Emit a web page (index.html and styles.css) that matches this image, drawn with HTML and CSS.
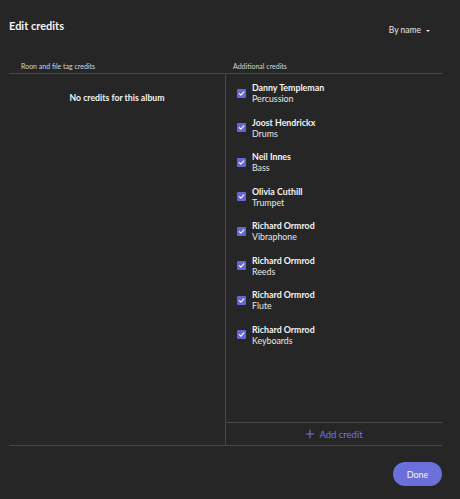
FILE: index.html
```html
<!DOCTYPE html>
<html>
<head>
<meta charset="utf-8">
<link rel="stylesheet" href="styles.css">
</head>
<body>
<div class="dialog">
  <div class="header">
    <h1 class="title">Edit credits</h1>
    <div class="sort">By name <span class="caret"></span></div>
  </div>
  <div class="table">
    <div class="col-head left-head">Roon and file tag credits</div>
    <div class="col-head right-head">Additional credits</div>
    <div class="col left-col">
      <div class="empty">No credits for this album</div>
    </div>
    <div class="col right-col">
      <ul class="credits">
        <li class="credit"><span class="check"><svg viewBox="0 0 10 10"><path d="M2.6 5.2 L4.3 6.9 L7.6 3.2" /></svg></span><div class="info"><div class="name">Danny Templeman</div><div class="role">Percussion</div></div></li>
        <li class="credit"><span class="check"><svg viewBox="0 0 10 10"><path d="M2.6 5.2 L4.3 6.9 L7.6 3.2" /></svg></span><div class="info"><div class="name">Joost Hendrickx</div><div class="role">Drums</div></div></li>
        <li class="credit"><span class="check"><svg viewBox="0 0 10 10"><path d="M2.6 5.2 L4.3 6.9 L7.6 3.2" /></svg></span><div class="info"><div class="name">Neil Innes</div><div class="role">Bass</div></div></li>
        <li class="credit"><span class="check"><svg viewBox="0 0 10 10"><path d="M2.6 5.2 L4.3 6.9 L7.6 3.2" /></svg></span><div class="info"><div class="name">Olivia Cuthill</div><div class="role">Trumpet</div></div></li>
        <li class="credit"><span class="check"><svg viewBox="0 0 10 10"><path d="M2.6 5.2 L4.3 6.9 L7.6 3.2" /></svg></span><div class="info"><div class="name">Richard Ormrod</div><div class="role">Vibraphone</div></div></li>
        <li class="credit"><span class="check"><svg viewBox="0 0 10 10"><path d="M2.6 5.2 L4.3 6.9 L7.6 3.2" /></svg></span><div class="info"><div class="name">Richard Ormrod</div><div class="role">Reeds</div></div></li>
        <li class="credit"><span class="check"><svg viewBox="0 0 10 10"><path d="M2.6 5.2 L4.3 6.9 L7.6 3.2" /></svg></span><div class="info"><div class="name">Richard Ormrod</div><div class="role">Flute</div></div></li>
        <li class="credit"><span class="check"><svg viewBox="0 0 10 10"><path d="M2.6 5.2 L4.3 6.9 L7.6 3.2" /></svg></span><div class="info"><div class="name">Richard Ormrod</div><div class="role">Keyboards</div></div></li>
      </ul>
      <div class="add-row">
        <svg class="plus" viewBox="0 0 12 12"><path d="M6 1 V11 M1 6 H11" /></svg>
        <span>Add credit</span>
      </div>
    </div>
  </div>
  <div class="footer">
    <button class="done">Done</button>
  </div>
</div>
</body>
</html>
```

FILE: styles.css
```css
html, body {
  margin: 0;
  padding: 0;
  background: #262626;
}
body {
  font-family: Lato, "Noto Sans", sans-serif;
  color: #f2f2f2;
  width: 460px;
  height: 499px;
  overflow: hidden;
}
.dialog {
  padding: 0 18px 0 9px;
}
.header {
  display: flex;
  justify-content: space-between;
  align-items: flex-start;
  height: 58px;
}
.title {
  margin: 18.6px 0 0 0;
  font-size: 11px;
  font-weight: 700;
  line-height: 14px;
  color: #f4f4f4;
}
.sort {
  margin: 24.2px 12px 0 0;
  font-size: 8.5px;
  line-height: 12px;
  color: #e8e8e8;
  display: flex;
  align-items: center;
}
.caret {
  display: inline-block;
  width: 0;
  height: 0;
  margin-left: 5px;
  margin-top: 1px;
  border-left: 2.5px solid transparent;
  border-right: 2.5px solid transparent;
  border-top: 2.5px solid #e8e8e8;
}
.table {
  display: grid;
  grid-template-columns: 217px 216px;
  grid-template-rows: 16px 371px;
  border-bottom: 1px solid #474747;
}
.col-head {
  font-size: 7px;
  line-height: 16px;
  color: #d6d6d6;
  border-bottom: 1px solid #474747;
}
.left-head {
  padding-left: 12px;
}
.right-head {
  padding-left: 7px;
}
.left-col {
  border-right: 1px solid #474747;
}
.empty {
  text-align: center;
  font-size: 8.7px;
  font-weight: 700;
  line-height: 12px;
  padding-top: 18px;
  color: #f4f4f4;
}
.right-col {
  display: flex;
  flex-direction: column;
}
.credits {
  list-style: none;
  margin: 0;
  padding: 8px 0 0 11px;
  flex: 1;
  display: flex;
  flex-direction: column;
  gap: 12.57px;
}
.credit {
  display: flex;
  align-items: center;
  gap: 6px;
}
.check {
  width: 9px;
  height: 9px;
  border-radius: 1px;
  background: #6466d8;
  display: flex;
}
.check svg {
  width: 9px;
  height: 9px;
}
.check path {
  fill: none;
  stroke: #ffffff;
  stroke-width: 1.3;
  stroke-linecap: round;
  stroke-linejoin: round;
}
.info {
  display: flex;
  flex-direction: column;
}
.name {
  font-size: 8.8px;
  font-weight: 700;
  line-height: 11px;
  color: #f4f4f4;
}
.role {
  font-size: 8.8px;
  line-height: 11px;
  color: #e6e6e6;
}
.add-row {
  height: 22px;
  border-top: 1px solid #474747;
  display: flex;
  align-items: center;
  justify-content: center;
  gap: 4px;
  color: #7274e0;
  font-size: 9.5px;
}
.plus {
  width: 10px;
  height: 10px;
}
.plus path {
  stroke: #7274e0;
  stroke-width: 1.3;
  fill: none;
}
.footer {
  display: flex;
  justify-content: flex-end;
  padding-top: 16px;
}
.done {
  width: 49px;
  height: 24px;
  border: none;
  border-radius: 12px;
  background: #6b6fd9;
  color: #f6f6ff;
  font-family: Lato, "Noto Sans", sans-serif;
  font-size: 9px;
  padding: 0;
}
```
